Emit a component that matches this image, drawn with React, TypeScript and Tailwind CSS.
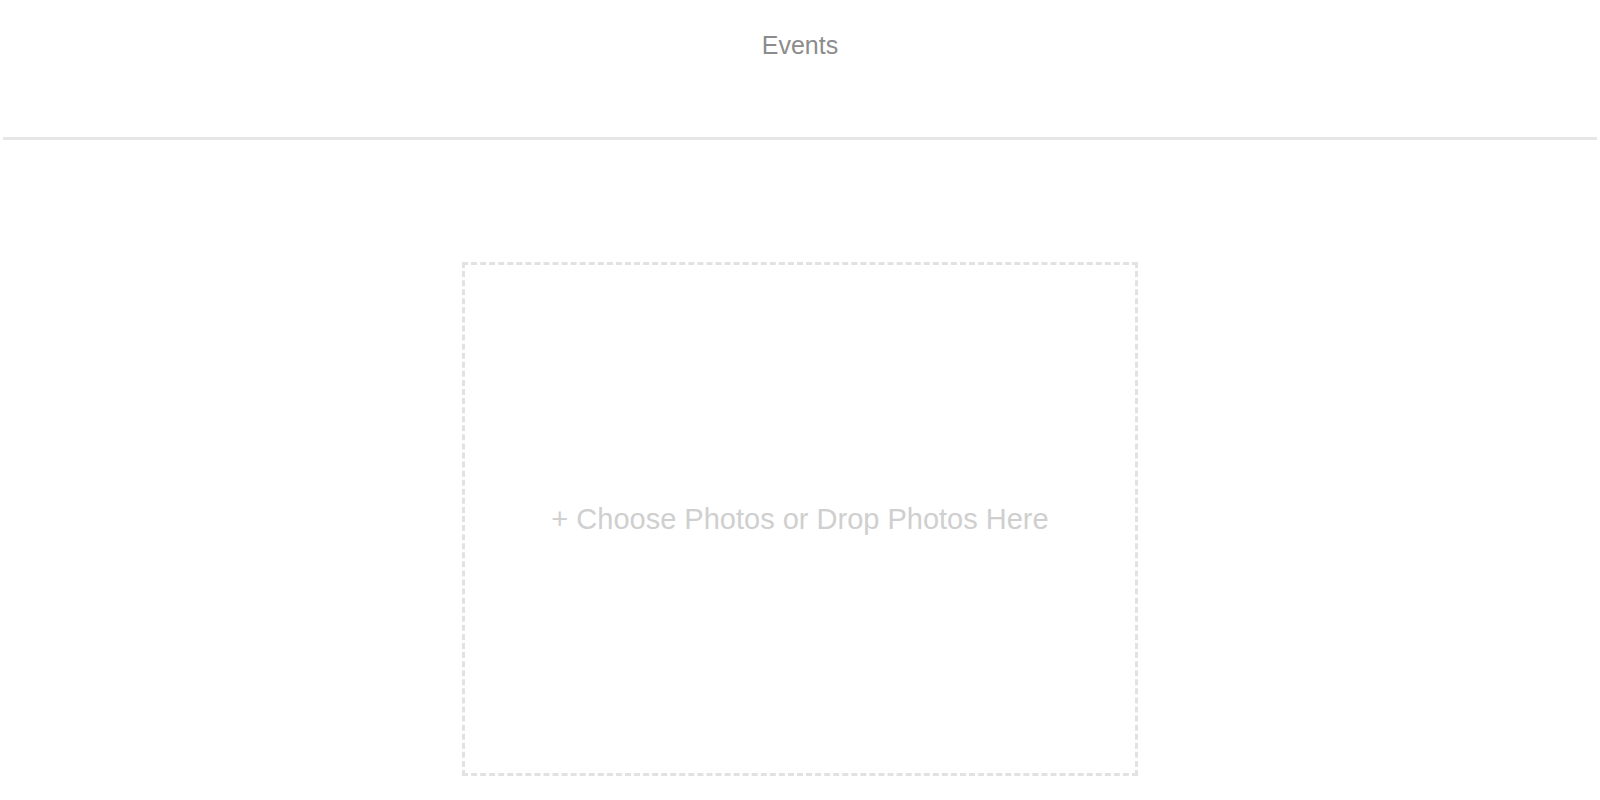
export default function App() {
  return (
    <div
      className="min-h-[800px] w-full bg-white"
      style={{ fontFamily: '"Liberation Sans", Arial, sans-serif' }}
    >
      <header className="h-[137px] flex justify-center pt-[30px]">
        <h1 className="text-[25px] leading-[30px] font-normal text-[#8c8c8c]">Events</h1>
      </header>
      <div className="mx-[3px] h-[3px] bg-[#e6e6e6]" />
      <main className="flex justify-center pt-[122px]">
        <div className="w-[676px] h-[514px] border-[3px] border-dashed border-[#e2e2e2] flex items-center justify-center">
          <span className="text-[29px] leading-[34px] text-[#cfcfcf]">
            + Choose Photos or Drop Photos Here
          </span>
        </div>
      </main>
    </div>
  );
}
